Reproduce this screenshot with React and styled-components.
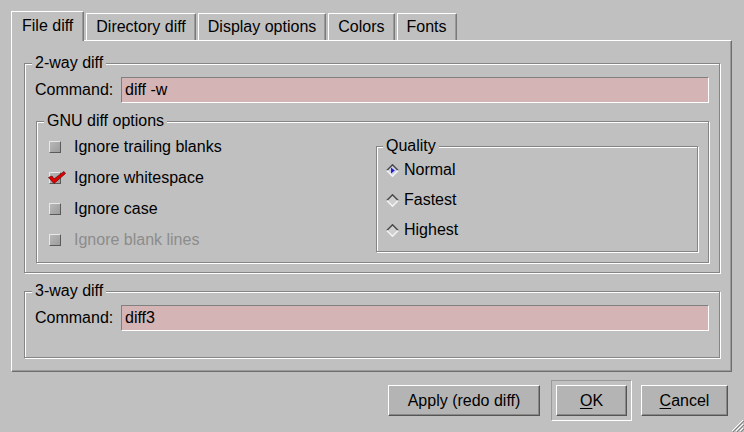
import React from "react"
import styled, { createGlobalStyle } from "styled-components"

const GlobalStyle = createGlobalStyle`
  html, body {
    margin: 0;
    padding: 0;
    background: #c0c0c0;
  }
  body {
    font-family: "Liberation Sans", Arial, sans-serif;
    font-size: 16px;
    color: #000;
  }
`

const Window = styled.div`
  position: relative;
  width: 744px;
  height: 432px;
  background: #c0c0c0;
  overflow: hidden;
  display: flex;
  flex-direction: column;
`

/* notebook tabs */
const TabBar = styled.div`
  display: flex;
  align-items: flex-end;
  gap: 2px;
  height: 40px;
  padding-left: 11px;
  position: relative;
  z-index: 1;
`

const Tab = styled.div`
  box-sizing: border-box;
  display: flex;
  align-items: center;
  justify-content: center;
  height: ${(p) => (p.$active ? "30px" : "27px")};
  margin-bottom: ${(p) => (p.$active ? "-1px" : "0")};
  padding: 0 ${(p) => (p.$active ? "10px" : "9px")} ${(p) => (p.$active ? "2px" : "0")};
  background: #c0c0c0;
  border-top: 1px solid #fff;
  border-left: 1px solid #fff;
  border-right: 1px solid #7a7a7a;
  box-shadow: inset -1px 0 0 #999;
  line-height: 18px;
  white-space: nowrap;
`

const Panel = styled.div`
  box-sizing: border-box;
  height: 332px;
  margin: 0 12px 0 11px;
  padding: 13px 11px 0 12px;
  border-top: 1px solid #fff;
  border-left: 1px solid #fff;
  border-right: 1px solid #6e6e6e;
  border-bottom: 1px solid #6e6e6e;
  box-shadow: inset -1px -1px 0 #9a9a9a;
  display: flex;
  flex-direction: column;
  gap: 9px;
`

/* Tk style labelframe with groove border */
const Group = styled.fieldset`
  margin: ${(p) => p.$margin || "0"};
  min-width: 0;
  padding: ${(p) => p.$pad};
  border: 1px solid #858585;
  box-shadow: inset 1px 1px 0 #fff, 1px 1px 0 #fff;
`

const Legend = styled.legend`
  padding: 0 3px;
  margin-left: -3px;
  line-height: 18px;
  background: #c0c0c0;
`

const CommandRow = styled.div`
  display: flex;
  align-items: center;
  gap: 5px;
`

const Label = styled.span`
  line-height: 18px;
  white-space: nowrap;
  color: ${(p) => (p.$disabled ? "#8c8c8c" : "#000")};
`

const CommandLabel = styled(Label)`
  width: 81px;
  flex-shrink: 0;
`

const Entry = styled.input`
  flex: 1;
  min-width: 0;
  box-sizing: border-box;
  height: 26px;
  padding: 0 3px;
  margin: 0;
  background: #d4b4b4;
  border-top: 1px solid #808080;
  border-left: 1px solid #808080;
  border-right: 1px solid #fff;
  border-bottom: 1px solid #fff;
  font-family: "Liberation Sans", Arial, sans-serif;
  font-size: 16px;
  color: #000;
  outline: none;
`

const OptionsGrid = styled.div`
  display: grid;
  grid-template-columns: 1fr 322px;
  align-items: start;
`

const List = styled.div`
  display: flex;
  flex-direction: column;
`

const OptionRow = styled.div`
  display: flex;
  align-items: center;
  height: ${(p) => p.$h}px;
`

const CheckBox = styled.span`
  position: relative;
  box-sizing: border-box;
  width: 12px;
  height: 12px;
  margin: 0 13px 0 2px;
  background: linear-gradient(135deg, #b8b8b8, #9c9c9c);
  border-top: 1px solid #e8e8e8;
  border-left: 1px solid #e8e8e8;
  border-right: 1px solid #5a5a5a;
  border-bottom: 1px solid #5a5a5a;
  flex-shrink: 0;
`

const CheckMark = styled.svg`
  position: absolute;
  left: -2px;
  top: -2px;
  overflow: visible;
`

const RadioIcon = styled.svg`
  flex-shrink: 0;
  margin: 0 5px 0 0;
`

const ButtonRow = styled.div`
  display: flex;
  justify-content: flex-end;
  align-items: center;
  margin-top: 8px;
  padding-right: 16px;
`

const Button = styled.button`
  box-sizing: border-box;
  width: ${(p) => p.$w}px;
  height: 31px;
  margin: ${(p) => p.$margin || "0"};
  padding: 0;
  background: #b4b4b4;
  border-top: 1px solid #fff;
  border-left: 1px solid #fff;
  border-right: 1px solid #555;
  border-bottom: 1px solid #555;
  box-shadow: inset -1px -1px 0 #888;
  font-family: "Liberation Sans", Arial, sans-serif;
  font-size: 16px;
  color: #000;
  cursor: default;

  u {
    text-decoration-thickness: 1px;
    text-underline-offset: 2px;
  }
`

const DefaultRing = styled.div`
  display: flex;
  padding: 4px;
  border-top: 1px solid #9a9a9a;
  border-left: 1px solid #9a9a9a;
  border-right: 1px solid #fff;
  border-bottom: 1px solid #fff;
`

const Grip = styled.svg`
  position: absolute;
  right: 0;
  bottom: 0;
`

const Check = ({ label, checked, disabled }) => (
  <OptionRow $h={31}>
    <CheckBox>
      {checked && (
        <CheckMark width="18" height="13" viewBox="0 0 18 13">
          <path
            d="M0.5 6.5 L4 5 L6 8 L16 0.5 L17.5 2.5 L6 12.5 Z"
            fill="#e00000"
            stroke="#6a0000"
            strokeWidth="0.7"
            strokeLinejoin="round"
          />
        </CheckMark>
      )}
    </CheckBox>
    <Label $disabled={disabled}>{label}</Label>
  </OptionRow>
)

const Radio = ({ label, selected }) => (
  <OptionRow $h={30}>
    <RadioIcon width="13" height="13" viewBox="0 0 13 13">
      <polygon points="6.5,1 12,6.5 6.5,12 1,6.5" fill={selected ? "#d0d0e4" : "#cfcfcf"} />
      {selected && <polygon points="5,3.5 8.8,6.5 5,9.5" fill="#2020c8" />}
      <polyline points="0.8,6.5 6.5,0.8 12.2,6.5" fill="none" stroke="#4a4a4a" strokeWidth="1.5" />
      <polyline points="0.8,6.5 6.5,12.2 12.2,6.5" fill="none" stroke="#f4f4f4" strokeWidth="1.5" />
    </RadioIcon>
    <Label>{label}</Label>
  </OptionRow>
)

const tabs = ["File diff", "Directory diff", "Display options", "Colors", "Fonts"]

export default function App() {
  return (
    <Window>
      <GlobalStyle />
      <TabBar>
        {tabs.map((t, i) => (
          <Tab key={t} $active={i === 0}>
            {t}
          </Tab>
        ))}
      </TabBar>

      <Panel>
        <Group $pad="5px 10px 9px 10px">
          <Legend>2-way diff</Legend>
          <CommandRow>
            <CommandLabel>Command:</CommandLabel>
            <Entry defaultValue="diff -w" />
          </CommandRow>

          <Group $pad="1px 10px 7px 10px" $margin="9px 0 0 1px">
            <Legend>GNU diff options</Legend>
            <OptionsGrid>
              <List>
                <Check label="Ignore trailing blanks" />
                <Check label="Ignore whitespace" checked />
                <Check label="Ignore case" />
                <Check label="Ignore blank lines" disabled />
              </List>
              <Group $pad="0 10px 6px 9px" $margin="6px 0 0 0">
                <Legend>Quality</Legend>
                <List>
                  <Radio label="Normal" selected />
                  <Radio label="Fastest" />
                  <Radio label="Highest" />
                </List>
              </Group>
            </OptionsGrid>
          </Group>
        </Group>

        <Group $pad="5px 10px 26px 10px">
          <Legend>3-way diff</Legend>
          <CommandRow>
            <CommandLabel>Command:</CommandLabel>
            <Entry defaultValue="diff3" />
          </CommandRow>
        </Group>
      </Panel>

      <ButtonRow>
        <Button $w={152} $margin="0 11px 0 0">
          Apply (redo diff)
        </Button>
        <DefaultRing>
          <Button $w={71}>
            <u>O</u>K
          </Button>
        </DefaultRing>
        <Button $w={87} $margin="0 0 0 9px">
          <u>C</u>ancel
        </Button>
      </ButtonRow>

      <Grip width="14" height="14" viewBox="0 0 14 14">
        <path d="M13 2 L2 13 M13 6 L6 13 M13 10 L10 13" stroke="#fff" strokeWidth="1" />
        <path d="M14 3 L3 14 M14 7 L7 14 M14 11 L11 14" stroke="#808080" strokeWidth="1" />
      </Grip>
    </Window>
  )
}
